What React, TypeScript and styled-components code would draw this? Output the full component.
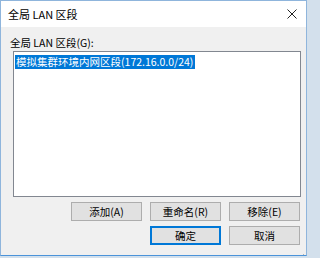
import React from "react";
import styled, { createGlobalStyle } from "styled-components";

const GlobalStyle = createGlobalStyle`
  html, body {
    margin: 0;
    padding: 0;
    background: #d3e0ec;
  }
  body {
    font-family: "Noto Sans CJK SC", "Liberation Sans", sans-serif;
    font-size: 11px;
    color: #000;
  }
`;

const Window = styled.div`
  width: 307px;
  height: 256px;
  box-sizing: border-box;
  border: 1px solid #4b93d9;
  border-top-color: #8fb5dc;
  border-left-color: #8fb5dc;
  border-right-color: #8fb5dc;
  background: #f0f0f0;
  display: flex;
  flex-direction: column;
`;

const TitleBar = styled.div`
  height: 26px;
  background: #ffffff;
  display: flex;
  align-items: center;
  justify-content: space-between;
  padding: 0 7px 0 7px;
`;

const Title = styled.span`
  font-size: 11px;
  line-height: 14px;
`;

const CloseButton = styled.div`
  width: 14px;
  height: 14px;
  display: flex;
  align-items: center;
  justify-content: center;
`;

const Content = styled.div`
  flex: 1;
  display: flex;
  flex-direction: column;
  padding: 8px 5px 0 12px;
`;

const Label = styled.div`
  margin-left: -3px;
  font-size: 10.5px;
  line-height: 16px;
  height: 16px;
`;

const ListBox = styled.div`
  height: 146px;
  box-sizing: border-box;
  border: 1px solid #828790;
  background: #ffffff;
  padding: 1px;
`;

const ListItem = styled.div<{ $selected?: boolean }>`
  display: inline-block;
  height: 14px;
  line-height: 14px;
  font-size: 10.5px;
  padding: 0 2px 0 1px;
  background: ${(p) => (p.$selected ? "#0078d7" : "transparent")};
  color: ${(p) => (p.$selected ? "#ffffff" : "#000000")};
`;

const ButtonRow = styled.div`
  display: flex;
  justify-content: flex-end;
  gap: 8px;
  margin-top: 5px;
  margin-right: 1px;
`;

const Button = styled.button<{ $default?: boolean }>`
  width: 71px;
  height: 19px;
  box-sizing: border-box;
  margin: 0;
  padding: 0;
  font-family: inherit;
  font-size: 10.5px;
  color: #000;
  background: #e1e1e1;
  border: 1px solid ${(p) => (p.$default ? "#0078d7" : "#adadad")};
  box-shadow: ${(p) => (p.$default ? "inset 0 0 0 1px #0078d7" : "none")};
`;

const Grip = styled.div`
  align-self: flex-end;
  margin-top: 2px;
  margin-right: -4px;
  width: 6px;
  height: 6px;
`;

export default function App() {
  return (
    <>
      <GlobalStyle />
      <Window>
        <TitleBar>
          <Title>全局 LAN 区段</Title>
          <CloseButton>
            <svg width="10" height="10" viewBox="0 0 10 10">
              <path d="M0.5 0.5 L9.5 9.5 M9.5 0.5 L0.5 9.5" stroke="#222" strokeWidth="1" fill="none" />
            </svg>
          </CloseButton>
        </TitleBar>
        <Content>
          <Label>全局 LAN 区段(G):</Label>
          <ListBox>
            <ListItem $selected>模拟集群环境内网区段(172.16.0.0/24)</ListItem>
          </ListBox>
          <ButtonRow>
            <Button>添加(A)</Button>
            <Button>重命名(R)</Button>
            <Button>移除(E)</Button>
          </ButtonRow>
          <ButtonRow>
            <Button $default>确定</Button>
            <Button>取消</Button>
          </ButtonRow>
          <Grip>
            <svg width="6" height="6" viewBox="0 0 6 6">
              <rect x="4" y="0" width="1" height="1" fill="#b4b4b4" />
              <rect x="2" y="2" width="1" height="1" fill="#b4b4b4" />
              <rect x="4" y="2" width="1" height="1" fill="#b4b4b4" />
              <rect x="0" y="4" width="1" height="1" fill="#b4b4b4" />
              <rect x="2" y="4" width="1" height="1" fill="#b4b4b4" />
              <rect x="4" y="4" width="1" height="1" fill="#b4b4b4" />
            </svg>
          </Grip>
        </Content>
      </Window>
    </>
  );
}
